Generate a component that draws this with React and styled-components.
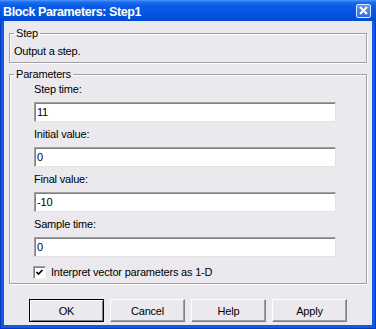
import React from "react";
import styled, { createGlobalStyle } from "styled-components";

// global reset
const Global = createGlobalStyle`
  html, body {
    margin: 0;
    padding: 0;
    background: #ffffff;
  }
  body {
    font-family: "Liberation Sans", Arial, sans-serif;
    font-size: 11px;
    color: #000;
  }
`;

// window frame

const Window = styled.div`
  width: 376px;
  height: 329px;
  display: flex;
  flex-direction: column;
`;

const TitleBar = styled.div`
  height: 21px;
  flex: none;
  display: flex;
  align-items: center;
  justify-content: space-between;
  padding: 0 5px 0 3px;
  box-sizing: border-box;
  background: linear-gradient(
    #4a9cff 0,
    #1f6cf0 2px,
    #0a5ce6 6px,
    #0556e4 60%,
    #0049d4 100%
  );
`;

const Title = styled.span`
  color: #ffffff;
  font-weight: bold;
  font-size: 12.5px;
  letter-spacing: -0.4px;
  padding-top: 3px;
`;

const CloseButton = styled.div`
  width: 15px;
  height: 14px;
  box-sizing: border-box;
  border: 1px solid #dfe9ff;
  border-radius: 2px;
  background: linear-gradient(#5b9af8, #2c6ae6);
  display: flex;
  align-items: center;
  justify-content: center;
`;

const Frame = styled.div`
  flex: 1;
  display: flex;
  padding: 0 4px 4px 4px;
  background: #0b5be6;
  box-shadow: inset 1px 0 #0836c4, inset -1px 0 #0836c4, inset 0 -1px #0836c4;
`;

const Client = styled.div`
  flex: 1;
  display: flex;
  flex-direction: column;
  padding: 6px 5px 3px 5px;
  background: #ebe9ed;
`;

// group boxes

const Group = styled.fieldset`
  margin: ${(p) => (p.$top ? p.$top : 0)}px 0 0 0;
  padding: ${(p) => p.$padTop}px 4px 4px 4px;
  border: 1px solid #a0a0a4;
  box-shadow: inset 1px 1px #ffffff, 1px 1px #ffffff;
  min-width: 0;
`;

const Legend = styled.legend`
  padding: 0 2px;
  margin-left: 0;
  font-size: 11px;
  line-height: 13px;
  letter-spacing: -0.2px;
`;

const Text = styled.div`
  line-height: 13px;
  letter-spacing: -0.2px;
`;

const Fields = styled.div`
  display: flex;
  flex-direction: column;
  gap: 6px;
  padding-left: 20px;
`;

const Field = styled.div`
  display: flex;
  flex-direction: column;
  gap: 6px;
`;

const Label = styled.label`
  line-height: 13px;
  letter-spacing: -0.2px;
`;

const Input = styled.input`
  width: 302px;
  height: 20px;
  box-sizing: border-box;
  margin: 0;
  padding: 0 2px;
  font-family: "Liberation Sans", Arial, sans-serif;
  font-size: 11px;
  letter-spacing: -0.2px;
  color: #000;
  background: #ffffff;
  border: 1px solid;
  border-color: #a0a0a0 #e3e3e3 #e3e3e3 #a0a0a0;
  box-shadow: inset 1px 1px #808080;
  outline: none;
`;

const CheckRow = styled.div`
  display: flex;
  align-items: center;
  gap: 5px;
  margin-top: 9px;
  padding-left: 19px;
  height: 13px;
`;

const CheckBox = styled.div`
  width: 13px;
  height: 13px;
  box-sizing: border-box;
  background: #ffffff;
  border: 1px solid;
  border-color: #a0a0a0 #f4f4f4 #f4f4f4 #a0a0a0;
  box-shadow: inset 1px 1px #808080;
  display: flex;
  align-items: center;
  justify-content: center;
`;

// buttons

const ButtonRow = styled.div`
  display: flex;
  gap: 6px;
  margin-top: 15px;
  padding-left: 20px;
`;

const Button = styled.button`
  width: 75px;
  height: 23px;
  box-sizing: border-box;
  margin: 0;
  padding: 0;
  font-family: "Liberation Sans", Arial, sans-serif;
  font-size: 11px;
  letter-spacing: -0.2px;
  color: #000;
  background: #ebe9ed;
  border: 1px solid;
  border-color: ${(p) => (p.$default ? "#000 #000 #000 #000" : "#ffffff #808080 #808080 #ffffff")};
  box-shadow: ${(p) =>
    p.$default
      ? "inset 1px 1px #ffffff, inset -1px -1px #808080"
      : "inset -1px -1px #a0a0a0"};
`;

const fields = [
  { label: "Step time:", value: "11" },
  { label: "Initial value:", value: "0" },
  { label: "Final value:", value: "-10" },
  { label: "Sample time:", value: "0" },
];

export default function App() {
  return (
    <Window>
      <Global />
      <TitleBar>
        <Title>Block Parameters: Step1</Title>
        <CloseButton>
          <svg width="9" height="9" viewBox="0 0 9 9">
            <path d="M1 1 L8 8 M8 1 L1 8" stroke="#ffffff" strokeWidth="2" />
          </svg>
        </CloseButton>
      </TitleBar>
      <Frame>
        <Client>
          <Group $padTop={5}>
            <Legend>Step</Legend>
            <Text>Output a step.</Text>
          </Group>
          <Group $top={5} $padTop={2}>
            <Legend>Parameters</Legend>
            <Fields>
              {fields.map((f) => (
                <Field key={f.label}>
                  <Label>{f.label}</Label>
                  <Input defaultValue={f.value} />
                </Field>
              ))}
            </Fields>
            <CheckRow>
              <CheckBox>
                <svg width="9" height="9" viewBox="0 0 9 9">
                  <path d="M1.5 4 L3.5 6 L7.5 2" fill="none" stroke="#000" strokeWidth="1.7" />
                </svg>
              </CheckBox>
              <Text>Interpret vector parameters as 1-D</Text>
            </CheckRow>
          </Group>
          <ButtonRow>
            <Button $default>OK</Button>
            <Button>Cancel</Button>
            <Button>Help</Button>
            <Button>Apply</Button>
          </ButtonRow>
        </Client>
      </Frame>
    </Window>
  );
}
